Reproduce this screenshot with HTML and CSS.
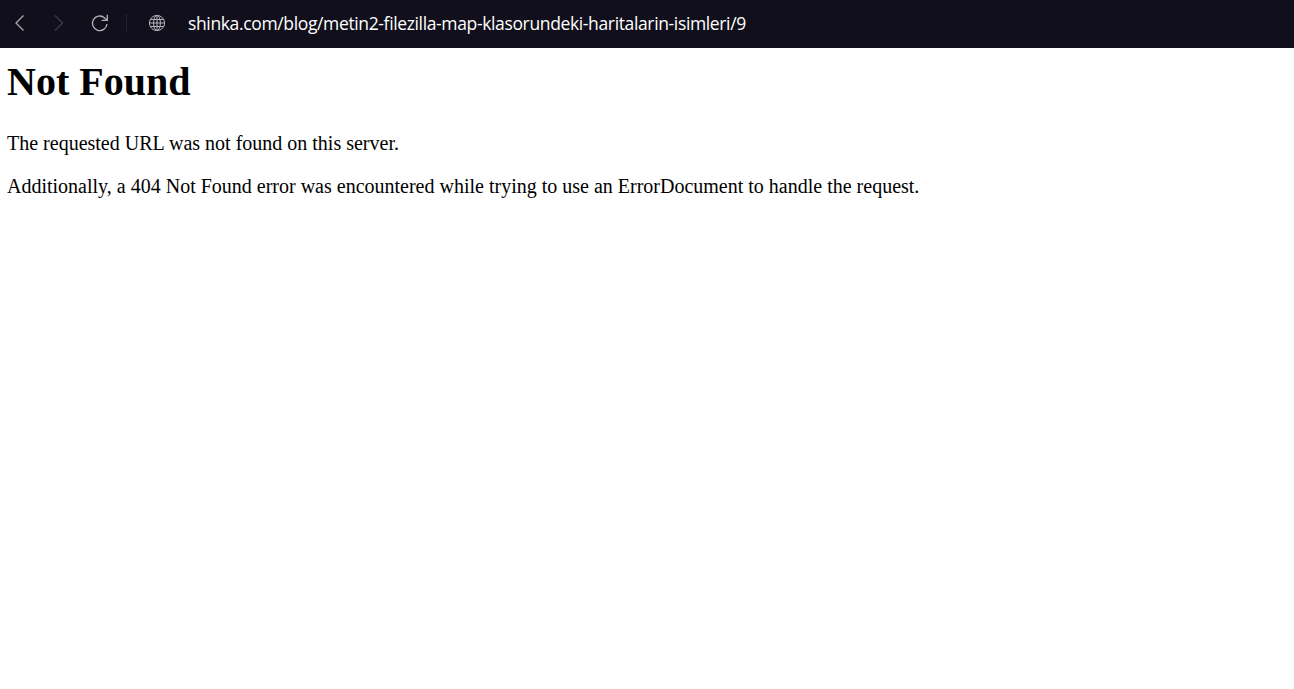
FILE: index.html
```html
<!DOCTYPE html>
<html lang="en">
<head>
<meta charset="utf-8">
<title>404 Not Found</title>
<link rel="stylesheet" href="styles.css">
</head>
<body>
<header class="toolbar">
  <svg class="icon icon-back" width="14" height="20" viewBox="0 0 14 20"><path d="M11.500 2.500 4 10l7.500 7.500"/></svg>
  <svg class="icon icon-forward" width="14" height="20" viewBox="0 0 14 20"><path d="M3 2.500 10.500 10 3 17.500"/></svg>
  <svg class="icon icon-reload" width="20" height="20" viewBox="0 0 20 20"><path d="M17 11a7.300 7.300 0 1 1-2.600-6.300L17 7"/><path d="M17.300 1.800V7.300H11.800"/></svg>
  <span class="divider"></span>
  <svg class="icon icon-globe" width="18" height="18" viewBox="0 0 18 18"><circle cx="9" cy="9" r="7.600"/><ellipse cx="9" cy="9" rx="3.400" ry="7.600"/><path d="M9 1.400v15.200M1.400 9h15.200M2.400 5.500h13.200M2.400 12.500h13.200"/></svg>
  <span class="url">shinka.com/blog/metin2-filezilla-map-klasorundeki-haritalarin-isimleri/9</span>
</header>
<main class="page">
  <h1 class="title">Not Found</h1>
  <p class="text">The requested URL was not found on this server.</p>
  <p class="text">Additionally, a 404 Not Found error was encountered while trying to use an ErrorDocument to handle the request.</p>
</main>
</body>
</html>
```
FILE: styles.css
```css
html, body {
  margin: 0;
  background: #fff;
}
.toolbar {
  height: 48px;
  background: #110f1b;
  display: flex;
  align-items: center;
  padding: 0 0 2px 12px;
  box-sizing: border-box;
}
.icon {
  fill: none;
  stroke: #a9a9ae;
  stroke-width: 1.300;
  flex: none;
}
.icon-forward {
  stroke: #3d3c46;
  margin-left: 26px;
}
.icon-reload {
  stroke: #b4b4b8;
  margin-left: 24px;
}
.divider {
  height: 16px;
  margin-left: 16px;
  border-left: 1px dotted #34333d;
}
.icon-globe {
  stroke: #b4b4b8;
  stroke-width: 1;
  margin-left: 21px;
}
.url {
  margin-left: 22px;
  color: #fff;
  font-family: "Open Sans", sans-serif;
  font-size: 17.500px;
  letter-spacing: -0.360px;
  line-height: 24px;
  white-space: nowrap;
}
.page {
  padding: 0 7px;
  color: #000;
  font-family: "Liberation Serif", serif;
  font-size: 20px;
}
.title {
  margin: 11px 0 0;
  font-size: 40px;
  line-height: 46px;
  font-weight: 700;
}
.text {
  margin: 20px 0 0;
  line-height: 23px;
}
.title + .text {
  margin-top: 27px;
}
```
